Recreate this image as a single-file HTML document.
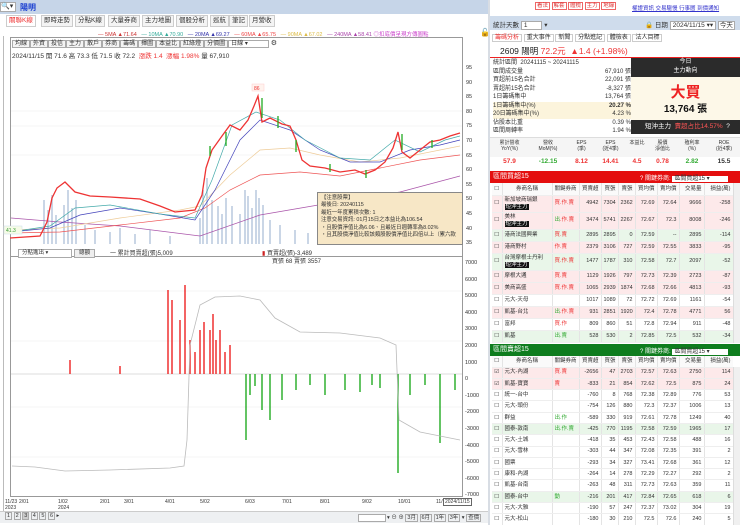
<!DOCTYPE html>
<html><head><meta charset="utf-8">
<style>
*{margin:0;padding:0;box-sizing:border-box}
body{width:740px;height:525px;overflow:hidden;background:#fff;font-family:"Liberation Sans","Noto Sans CJK TC",sans-serif;font-size:7px;color:#333;position:relative}
.a{position:absolute;white-space:nowrap}
.tab{position:absolute;top:15px;height:12px;border:1px solid #ccc;background:#f4f4f4;font-size:6.5px;line-height:10px;padding:0 2px}
.btn{position:absolute;border:1px solid #aaa;background:#f4f4f4;font-size:6px;line-height:8px;padding:0 2px;height:10px}
.wrap{position:absolute;overflow:hidden}
table{border-collapse:collapse;table-layout:fixed;font-size:5.5px;line-height:6.5px;width:241px}
td{border-right:1px solid #e4e4e4;border-bottom:1px solid #eee;padding:0 2px;text-align:right;overflow:hidden;white-space:nowrap}
td:first-child{text-align:center;padding:0}
td:nth-child(2){text-align:left}
td:nth-child(3){text-align:left}
.tag{background:#111;color:#fff;padding:0 1px}
.p{background:#fde9ea}.g{background:#e9f6e9}
.r{color:#e33}.gr{color:#3a3}
</style></head><body>
<div class="a" style="left:0;top:0;width:490px;height:14px;background:#c6d5e8"></div>
<div class="a" style="left:0;top:2px;width:16px;height:10px;background:#fff;border:1px solid #aaa;font-size:7px;line-height:8px">🔍▾</div>
<div class="a" style="left:20px;top:2px;font-size:8px;color:#1a3fd0;font-weight:bold">陽明</div>
<div class="tab" style="left:6px;color:#e33;background:#fff">關聯K線</div>
<div class="tab" style="left:41px">即時走勢</div>
<div class="tab" style="left:75px">分點K線</div>
<div class="tab" style="left:108px">大量券商</div>
<div class="tab" style="left:142px">主力地圖</div>
<div class="tab" style="left:176px">個股分析</div>
<div class="tab" style="left:210px">巡航</div>
<div class="tab" style="left:229px">筆記</div>
<div class="tab" style="left:249px">月營收</div>
<div class="a" style="left:98px;top:30px;font-size:5.5px">
<span style="color:#c33">— 5MA ▲71.64</span>&nbsp;&nbsp;&nbsp;<span style="color:#3a9">— 10MA ▲70.90</span>&nbsp;&nbsp;&nbsp;<span style="color:#33a">— 20MA ▲69.27</span>&nbsp;&nbsp;&nbsp;<span style="color:#e44">— 60MA ▲65.75</span>&nbsp;&nbsp;&nbsp;<span style="color:#db4">— 90MA ▲67.02</span>&nbsp;&nbsp;&nbsp;<span style="color:#a4a">— 240MA ▲58.41</span> <span style="color:#c4c">◎扣底價呈現方傳圖點</span></div>
<div class="a" style="left:480px;top:28px;font-size:8px">🔓</div>
<div class="a" style="left:3px;top:36px;width:1px;height:475px;background:#bbb"></div>
<div class="a" style="left:10px;top:37px;width:453px;height:220px;border:1px solid #999"></div>
<div class="a" style="left:10px;top:257px;width:453px;height:240px;border:1px solid #999;border-top:none"></div>
<div class="a" style="left:12px;top:39px">
<span class="btn" style="position:relative">均線</span><span class="btn" style="position:relative">外資</span><span class="btn" style="position:relative">投信</span><span class="btn" style="position:relative">主力</span><span class="btn" style="position:relative">散戶</span><span class="btn" style="position:relative">券商</span><span class="btn" style="position:relative">籌碼</span><span class="btn" style="position:relative">揮圖</span><span class="btn" style="position:relative">本益比</span><span class="btn" style="position:relative">紅綠燈</span><span class="btn" style="position:relative">分價圖</span><span class="btn" style="position:relative;background:#fff;padding-right:20px">日線 ▾</span> ⚙</div>
<div class="a" style="left:12px;top:50px;font-size:6.5px">2024/11/15 開 71.6 高 73.3 低 71.5 收 72.2 &nbsp;<span class="r">漲跌 1.4 &nbsp;漲幅 1.98%</span> 量 67,910</div>
<svg class="a" style="left:0;top:0" width="490" height="525" viewBox="0 0 490 525">
<g stroke="#eee" stroke-width="0.6">
<line x1="11" y1="111" x2="462" y2="111"/><line x1="11" y1="126" x2="462" y2="126"/><line x1="11" y1="155" x2="462" y2="155"/>
<line x1="11" y1="291" x2="462" y2="291"/><line x1="11" y1="341" x2="462" y2="341"/><line x1="11" y1="407" x2="462" y2="407"/><line x1="11" y1="457" x2="462" y2="457"/>
</g>
<g stroke="#b8c9dd" stroke-width="1.5">
<path d="M44 244V200M48 244V210M52 244V195M56 244V215M64 244V205M68 244V190M72 244V208M76 244V200M85 244V225M95 244V230M110 244V232M120 244V228M135 244V234M150 244V230M170 244V236M200 244V218M203 244V190M207 244V178M212 244V200M218 244V206M222 244V214M226 244V198M232 244V206M240 244V214M245 244V190M248 244V196M252 244V208M256 244V190M259 244V198M263 244V205M270 244V220M280 244V225M295 244V230M308 244V233M320 244V236M340 244V232M360 244V230M380 244V226M395 244V222M400 244V215M410 244V228M425 244V230M440 244V225M455 244V230"/>
</g>
<polyline fill="none" stroke="#a5a" stroke-width="0.8" points="11,218 60,222 120,226 200,236 260,215 330,203 400,192 460,176"/>
<polyline fill="none" stroke="#e55" stroke-width="0.7" points="11,233 60,232 120,225 180,218 205,208 230,190 260,175 300,172 340,176 380,168 420,160 460,155"/>
<polyline fill="none" stroke="#ec9" stroke-width="0.7" points="11,230 60,228 120,218 180,210 200,206 230,175 260,150 290,148 320,155 360,162 400,158 440,150 460,146"/>
<polyline fill="none" stroke="#44b" stroke-width="0.7" points="11,232 50,228 80,215 120,208 160,214 195,220 215,190 240,140 260,120 290,130 320,150 350,162 380,162 410,150 440,145 460,140"/>
<polyline fill="none" stroke="#4aa" stroke-width="0.7" points="11,232 50,226 75,208 110,205 160,214 195,218 212,180 232,125 256,112 280,120 305,140 340,158 370,160 395,140 420,152 445,140 460,136"/>
<polyline fill="none" stroke="#e33" stroke-width="1.3" points="10,238 40,236 47,222 52,198 57,188 65,182 75,192 90,196 110,197 140,199 160,206 175,212 195,210 202,195 206,168 212,150 222,136 230,125 240,130 248,120 254,106 258,96 262,122 270,118 282,124 290,126 296,140 302,160 310,166 325,168 340,172 355,170 365,174 375,170 385,162 393,148 398,132 402,152 410,158 420,150 430,142 440,140 450,136 460,133"/>
<g stroke="#2a2" stroke-width="1.3"><path d="M210 146v10M226 132v14M262 98v20M278 116v12M296 140v12M330 164v8M366 170v8M402 134v16M432 140v8"/></g>
<rect x="252" y="84" width="12" height="7" fill="#fff3ee" stroke="#fcc" stroke-width="0.5"/><text x="254" y="90" font-size="5" fill="#e33">86</text>
<rect x="4" y="226" width="18" height="8" fill="#f6fbe6" stroke="#cde" stroke-width="0.5"/><text x="6" y="232" font-size="5" fill="#393">41.3</text>
<line x1="11" y1="374" x2="462" y2="374" stroke="#bbb" stroke-width="0.5"/>
<g stroke="#e22" stroke-width="1.4"><path d="M168 374V290M172 374V300M180 374V320M185 374V285M190 374V340M195 374V352M200 374V330M204 374V322M210 374V330M213 374V314M216 374V340M220 374V330M225 374V352M230 374V345M70 374V360M120 374V366"/></g>
<g stroke="#2a2" stroke-width="1.4"><path d="M246 374V440M250 374V395M255 374V386M262 374V410M270 374V420M282 374V400M296 374V390M310 374V385M325 374V395M345 374V390M360 374V392M372 374V385M380 374V388M398 374V473M410 374V395M425 374V385M440 374V443M455 374V390"/></g>
<polyline fill="none" stroke="#bbb" stroke-width="0.8" points="12,466 35,467 65,471 110,470 170,468 184,466 187,440 190,345 200,305 215,297 240,296 260,300 275,318 300,332 340,333 380,338 396,345 399,420 420,432 460,440"/>
</svg>
<div class="a" style="left:466px;top:61px;font-size:5.5px;line-height:14.6px">95<br>90<br>85<br>80<br>75<br>70<br>65<br>60<br>55<br>50<br>45<br>40<br>35</div>
<div class="a" style="left:465px;top:255px;font-size:5.5px;line-height:16.6px">7000<br>6000<br>5000<br>4000<br>3000<br>2000<br>1000<br>0<br>-1000<br>-2000<br>-3000<br>-4000<br>-5000<br>-6000<br>-7000</div>
<div class="a" style="left:317px;top:192px;width:146px;height:53px;background:#f7e7c6;border:1px solid #888;font-size:5.4px;line-height:7.4px;padding:2px 3px;white-space:normal;overflow:hidden">【注意股票】<br>最後日: 20240115<br>最近一年度累積次數: 1<br>注意交易資訊: 01月15日之本益比為106.54<br>・且股價淨值比為6.06、且最近日週轉率為8.02%<br>・且其股價淨值比較該類股股價淨值比四倍以上（累六款</div>
<div class="a" style="left:18px;top:249px;width:54px;height:9px;border:1px solid #aaa;background:#fff;font-size:5.5px;line-height:7px;padding-left:3px">分點進出 ▾</div>
<div class="a" style="left:74px;top:249px;width:21px;height:9px;border:1px solid #aaa;background:#eee;font-size:5.5px;line-height:7px;text-align:center">總額</div>
<div class="a" style="left:110px;top:248px;font-size:6px">一 累計買賣超(張)5,009</div>
<div class="a" style="left:262px;top:248px;font-size:6px"><span style="color:#c22">▮</span> 買賣超(張)-3,489</div>
<div class="a" style="left:272px;top:256px;font-size:6px">買張 68 賣張 3557</div>
<div class="a" style="left:0;top:499px;width:490px;font-size:5px;line-height:6px">
<span class="a" style="left:5px">11/23<br>2023</span><span class="a" style="left:19px">2/01</span><span class="a" style="left:58px">1/02<br>2024</span><span class="a" style="left:100px">2/01</span><span class="a" style="left:124px">3/01</span><span class="a" style="left:165px">4/01</span><span class="a" style="left:200px">5/02</span><span class="a" style="left:245px">6/03</span><span class="a" style="left:282px">7/01</span><span class="a" style="left:320px">8/01</span><span class="a" style="left:362px">9/02</span><span class="a" style="left:398px">10/01</span><span class="a" style="left:436px">11/</span><span class="a" style="left:443px;border:1px solid #666;background:#fff;padding:0 1px;top:-1px">2024/11/15</span></div>
<div class="a" style="left:0;top:511px;width:490px;height:12px;background:#eef0f2;border-top:1px solid #ccc"></div>
<div class="a" style="left:5px;top:513px;font-size:5.5px"><span style="border:1px solid #aaa;padding:0 1px">1</span> <span style="border:1px solid #aaa;padding:0 1px">2</span> <span style="border:1px solid #aaa;padding:0 1px;background:#ccc">3</span> <span style="border:1px solid #aaa;padding:0 1px">4</span> <span style="border:1px solid #aaa;padding:0 1px">5</span> <span style="border:1px solid #aaa;padding:0 1px">6</span> ▸</div>
<div class="a" style="left:358px;top:513px;font-size:5.5px"><span style="border:1px solid #aaa;background:#fff;padding:0 12px">&nbsp;</span> ▾ ⊖ ⊕ <span style="border:1px solid #aaa;padding:0 1px">3月</span> <span style="border:1px solid #aaa;padding:0 1px">6月</span> <span style="border:1px solid #aaa;padding:0 1px">1年</span> <span style="border:1px solid #aaa;padding:0 1px">3年</span> ▾ <span style="border:1px solid #aaa;padding:0 1px">查價</span></div>

<!-- RIGHT PANEL -->
<div class="a" style="left:488px;top:0;width:2px;height:525px;background:#d8dde4"></div>
<div class="a" style="left:535px;top:3px;font-size:5.5px;line-height:7px">
<span style="border:1px solid #e66;color:#d33;padding:0 1px">看法</span> <span style="border:1px solid #e66;color:#d33;padding:0 1px">解套</span> <span style="border:1px solid #e66;color:#d33;padding:0 1px">體檢</span> <span style="border:1px solid #e66;color:#d33;padding:0 1px">主力</span> <span style="border:1px solid #e66;color:#d33;padding:0 1px">地緣</span></div>
<div class="a" style="left:632px;top:4px;font-size:5.5px;color:#33c;text-decoration:underline">權證資訊 交易驅慢 行事曆 到價通知</div>
<div class="a" style="left:490px;top:16px;width:250px;height:14px;background:#cfdcec"></div>
<div class="a" style="left:493px;top:19px;font-size:6.5px">統計天數 <span style="background:#fff;border:1px solid #aaa;padding:0 14px 0 2px">1</span> ▾</div>
<div class="a" style="left:645px;top:19px;font-size:6.5px">🔒 日期 <span style="background:#fff;border:1px solid #aaa;padding:0 2px">2024/11/15 ▾▾</span> <span style="background:#fff;border:1px solid #aaa;padding:0 1px">今天</span></div>
<div class="a" style="left:492px;top:32px;font-size:6px">
<span style="border:1px solid #ccc;padding:0 2px;color:#e33">籌碼分析</span> <span style="border:1px solid #ccc;padding:0 2px">重大事件</span> <span style="border:1px solid #ccc;padding:0 2px">新聞</span> <span style="border:1px solid #ccc;padding:0 2px">分點進記</span> <span style="border:1px solid #ccc;padding:0 2px">體檢表</span> <span style="border:1px solid #ccc;padding:0 2px">法人目標</span></div>
<div class="a" style="left:490px;top:43px;width:250px;height:15px;border-bottom:1.5px solid #e22"></div>
<div class="a" style="left:500px;top:45px;font-size:8.5px;color:#222">2609 陽明 <span class="r">72.2元 &nbsp;▲1.4 (+1.98%)</span></div>
<div class="a" style="left:493px;top:59px;width:138px;font-size:6px;line-height:8.5px">
<div>統計區間 &nbsp;20241115 ~ 20241115</div>
<div>區間成交量<span style="float:right">67,910 張</span></div>
<div>買超前15名合計<span style="float:right">22,091 張</span></div>
<div>賣超前15名合計<span style="float:right">-8,327 張</span></div>
<div>1日籌碼集中<span style="float:right">13,764 張</span></div>
<div style="background:#fcf4dc">1日籌碼集中(%)<span style="float:right;font-weight:bold">20.27 %</span></div>
<div style="background:#fcf4dc">20日籌碼集中(%)<span style="float:right">4.23 %</span></div>
<div>佔股本比重<span style="float:right">0.39 %</span></div>
<div>區間周轉率<span style="float:right">1.94 %</span></div>
</div>
<div class="a" style="left:631px;top:58px;width:109px;height:76px;background:#fdf8e8"></div>
<div class="a" style="left:631px;top:58px;width:109px;height:19px;background:#2b2b2b;color:#fff;font-size:6px;text-align:center;line-height:9px">今日<br>主力動向</div>
<div class="a" style="left:631px;top:81px;width:109px;text-align:center;font-size:15px;color:#e22;font-weight:bold">大買</div>
<div class="a" style="left:631px;top:100px;width:109px;text-align:center;font-size:10px;color:#111;font-weight:bold">13,764 張</div>
<div class="a" style="left:631px;top:120px;width:109px;height:14px;background:#2b2b2b;color:#fff;font-size:6.5px;line-height:14px;padding-left:14px">短沖主力 &nbsp;<span style="color:#f55">賣超占比14.57%</span> &nbsp;?</div>
<div class="a" style="left:490px;top:137px;width:250px;height:20px;background:#f5f5f5;border-top:1px solid #ddd"></div>
<div class="a" style="left:490px;top:140px;width:250px;font-size:5px;line-height:6px;display:flex;text-align:center">
<div style="width:39px">累計營收<br>YoY(%)</div><div style="width:38px">營收<br>MoM(%)</div><div style="width:29px">EPS<br>(季)</div><div style="width:29px">EPS<br>(近4季)</div><div style="width:24px">本益比</div><div style="width:27px">股價<br>淨值比</div><div style="width:32px">殖利率<br>(%)</div><div style="width:32px">ROE<br>(近4季)</div></div>
<div class="a" style="left:490px;top:158px;width:250px;font-size:6.5px;font-weight:bold;display:flex;text-align:center">
<div style="width:39px" class="r">57.9</div><div style="width:38px" class="gr">-12.15</div><div style="width:29px" class="r">8.12</div><div style="width:29px" class="r">14.41</div><div style="width:24px" class="r">4.5</div><div style="width:27px" class="r">0.78</div><div style="width:32px" class="gr">2.82</div><div style="width:32px">15.5</div></div>
<!-- buy -->
<div class="a" style="left:490px;top:171px;width:250px;height:12px;background:#e40e0e;color:#fff;font-size:7px;line-height:12px;padding-left:3px">區間買超15</div>
<div class="a" style="left:640px;top:173px;font-size:6px;color:#fff">? 關鍵券商: <span style="background:#fff;color:#333;padding:0 18px 0 2px">區間買超15 ▾</span></div>
<div class="wrap" style="left:492px;top:183px;width:241px;height:160px">
<table>
<colgroup><col style="width:10px"><col style="width:50px"><col style="width:27px"><col style="width:22px"><col style="width:17px"><col style="width:17px"><col style="width:22px"><col style="width:22px"><col style="width:25px"><col style="width:29px"></colgroup>
<tr style="height:12px;background:#fafafa"><td>☐</td><td style="text-align:center">券商名稱</td><td>關鍵券商</td><td>買賣超</td><td>買張</td><td>賣張</td><td>買均價</td><td>賣均價</td><td>交易量</td><td>損益(萬)</td></tr>
<tr class="p" style="height:17px"><td>☐</td><td>新加坡商瑞銀<br><span class="tag">短沖主力</span></td><td class="r">買.作.賣</td><td>4942</td><td>7304</td><td>2362</td><td>72.69</td><td>72.64</td><td>9666</td><td>-258</td></tr>
<tr class="p" style="height:17px"><td>☐</td><td>美林<br><span class="tag">短沖主力</span></td><td><span class="gr">出</span><span class="r">.作.賣</span></td><td>3474</td><td>5741</td><td>2267</td><td>72.67</td><td>72.3</td><td>8008</td><td>-246</td></tr>
<tr class="g" style="height:12px"><td>☐</td><td>港商法國興業</td><td class="r">買.賣</td><td>2895</td><td>2895</td><td>0</td><td>72.59</td><td>--</td><td>2895</td><td>-114</td></tr>
<tr class="p" style="height:12px"><td>☐</td><td>港商野村</td><td class="r">作.賣</td><td>2379</td><td>3106</td><td>727</td><td>72.59</td><td>72.55</td><td>3833</td><td>-95</td></tr>
<tr class="g" style="height:17px"><td>☐</td><td>台灣摩根士丹利<br><span class="tag">短沖主力</span></td><td class="r">買.作.賣</td><td>1477</td><td>1787</td><td>310</td><td>72.58</td><td>72.7</td><td>2097</td><td>-52</td></tr>
<tr class="p" style="height:12px"><td>☐</td><td>摩根大通</td><td class="r">買.賣</td><td>1129</td><td>1926</td><td>797</td><td>72.73</td><td>72.39</td><td>2723</td><td>-87</td></tr>
<tr class="p" style="height:12px"><td>☐</td><td>美商高盛</td><td class="r">買.作.賣</td><td>1065</td><td>2939</td><td>1874</td><td>72.68</td><td>72.66</td><td>4813</td><td>-93</td></tr>
<tr style="height:12px"><td>☐</td><td>元大-天母</td><td></td><td>1017</td><td>1089</td><td>72</td><td>72.72</td><td>72.69</td><td>1161</td><td>-54</td></tr>
<tr class="p" style="height:12px"><td>☐</td><td>凱基-台北</td><td><span class="gr">出</span><span class="r">.作.賣</span></td><td>931</td><td>2851</td><td>1920</td><td>72.4</td><td>72.78</td><td>4771</td><td>56</td></tr>
<tr style="height:12px"><td>☐</td><td>富邦</td><td class="r">買.作</td><td>809</td><td>860</td><td>51</td><td>72.8</td><td>72.94</td><td>911</td><td>-48</td></tr>
<tr class="g" style="height:12px"><td>☐</td><td>凱基</td><td class="gr">出.賣</td><td>528</td><td>530</td><td>2</td><td>72.85</td><td>72.5</td><td>532</td><td>-34</td></tr>
<tr style="height:12px"><td>☐</td><td>統一</td><td>作</td><td>439</td><td>579</td><td>140</td><td>72.74</td><td>72.41</td><td>719</td><td>-28</td></tr>
</table></div>
<!-- sell -->
<div class="a" style="left:490px;top:344px;width:250px;height:12px;background:#0e7d1e;color:#fff;font-size:7px;line-height:12px;padding-left:3px">區間賣超15</div>
<div class="a" style="left:640px;top:346px;font-size:6px;color:#fff">? 關鍵券商: <span style="background:#fff;color:#333;padding:0 18px 0 2px">區間賣超15 ▾</span></div>
<div class="wrap" style="left:492px;top:356px;width:241px;height:169px">
<table>
<colgroup><col style="width:10px"><col style="width:50px"><col style="width:27px"><col style="width:22px"><col style="width:17px"><col style="width:17px"><col style="width:22px"><col style="width:22px"><col style="width:25px"><col style="width:29px"></colgroup>
<tr style="height:11px;background:#fafafa"><td>☐</td><td style="text-align:center">券商名稱</td><td>關鍵券商</td><td>買賣超</td><td>買張</td><td>賣張</td><td>買均價</td><td>賣均價</td><td>交易量</td><td>損益(萬)</td></tr>
<tr class="p" style="height:11.3px"><td>☑</td><td>元大-內湖</td><td class="r">買.賣</td><td>-2656</td><td>47</td><td>2703</td><td>72.57</td><td>72.63</td><td>2750</td><td>114</td></tr>
<tr class="p" style="height:11.3px"><td>☑</td><td>凱基-寶寶</td><td class="r">賣</td><td>-833</td><td>21</td><td>854</td><td>72.62</td><td>72.5</td><td>875</td><td>24</td></tr>
<tr style="height:11.3px"><td>☐</td><td>統一-台中</td><td></td><td>-760</td><td>8</td><td>768</td><td>72.38</td><td>72.89</td><td>776</td><td>53</td></tr>
<tr style="height:11.3px"><td>☐</td><td>元大-頭份</td><td></td><td>-754</td><td>126</td><td>880</td><td>72.3</td><td>72.37</td><td>1006</td><td>13</td></tr>
<tr style="height:11.3px"><td>☐</td><td>群益</td><td class="gr">出.作</td><td>-589</td><td>330</td><td>919</td><td>72.61</td><td>72.78</td><td>1249</td><td>40</td></tr>
<tr class="g" style="height:11.3px"><td>☐</td><td>國泰-敦南</td><td class="gr">出.作.賣</td><td>-425</td><td>770</td><td>1195</td><td>72.58</td><td>72.59</td><td>1965</td><td>17</td></tr>
<tr style="height:11.3px"><td>☐</td><td>元大-土城</td><td></td><td>-418</td><td>35</td><td>453</td><td>72.43</td><td>72.58</td><td>488</td><td>16</td></tr>
<tr style="height:11.3px"><td>☐</td><td>元大-雪林</td><td></td><td>-303</td><td>44</td><td>347</td><td>72.08</td><td>72.35</td><td>391</td><td>2</td></tr>
<tr style="height:11.3px"><td>☐</td><td>國票</td><td></td><td>-293</td><td>34</td><td>327</td><td>73.41</td><td>72.68</td><td>361</td><td>12</td></tr>
<tr style="height:11.3px"><td>☐</td><td>康和-內湖</td><td></td><td>-264</td><td>14</td><td>278</td><td>72.29</td><td>72.27</td><td>292</td><td>2</td></tr>
<tr style="height:11.3px"><td>☐</td><td>凱基-台南</td><td></td><td>-263</td><td>48</td><td>311</td><td>72.73</td><td>72.63</td><td>359</td><td>11</td></tr>
<tr class="g" style="height:11.3px"><td>☐</td><td>國泰-台中</td><td class="gr">動</td><td>-216</td><td>201</td><td>417</td><td>72.84</td><td>72.65</td><td>618</td><td>6</td></tr>
<tr style="height:11.3px"><td>☐</td><td>元大-大雅</td><td></td><td>-190</td><td>57</td><td>247</td><td>72.37</td><td>73.02</td><td>304</td><td>19</td></tr>
<tr style="height:11.3px"><td>☐</td><td>元大-松山</td><td></td><td>-180</td><td>30</td><td>210</td><td>72.5</td><td>72.6</td><td>240</td><td>5</td></tr>
</table></div>
<div class="a" style="left:733px;top:183px;width:7px;height:160px;background:#f0f0f0;border-left:1px solid #ddd"></div>
<div class="a" style="left:733px;top:367px;width:7px;height:158px;background:#f0f0f0;border-left:1px solid #ddd"></div>
</body></html>
